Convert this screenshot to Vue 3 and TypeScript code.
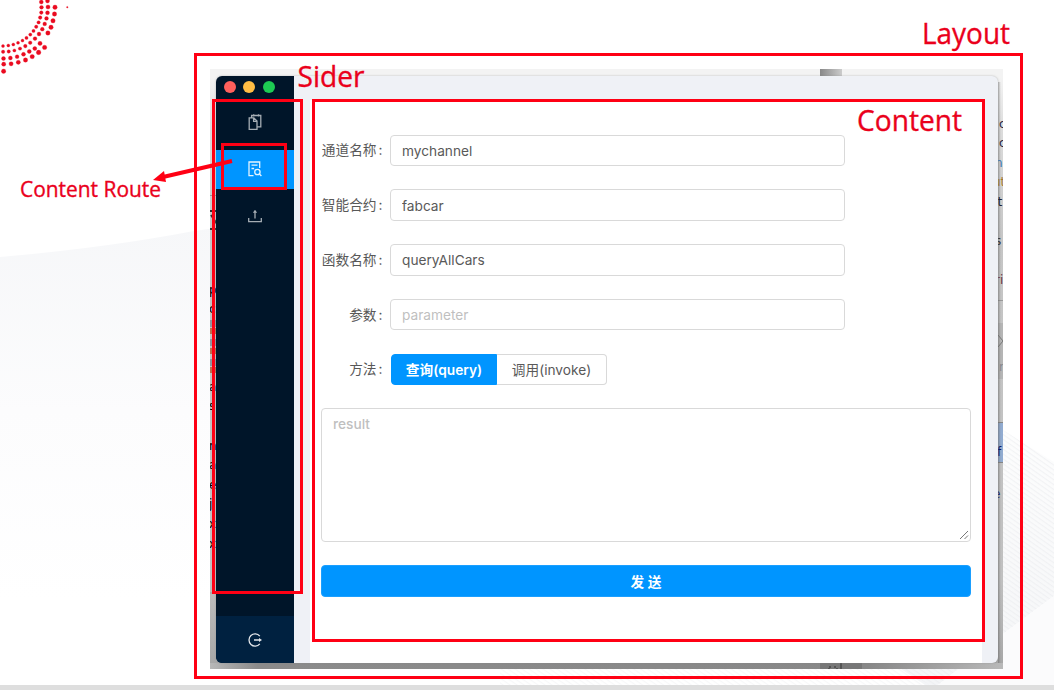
<script setup lang="ts">
import { ref } from 'vue'

interface Field {
  label: string
  value: string
  placeholder: string
}

const fields = ref<Field[]>([
  { label: '通道名称', value: 'mychannel', placeholder: '' },
  { label: '智能合约', value: 'fabcar', placeholder: '' },
  { label: '函数名称', value: 'queryAllCars', placeholder: '' },
  { label: '参数', value: '', placeholder: 'parameter' },
])
const method = ref<'query' | 'invoke'>('query')

// x, y, radius of each dot in the corner ornament
const dots: number[][] = [
  [41.3, 2, 2], [47.5, 1, 2], [41.5, 7.3, 1.9], [48, 7, 2.1], [55, 7.2, 2.2],
  [41.3, 12.6, 1.8], [47.5, 12.8, 2], [54.5, 14, 2.2], [40.2, 17.6, 1.8], [46.5, 18.4, 1.9], [53, 20.8, 2.2],
  [38.6, 22.4, 1.7], [44.7, 23.9, 1.9], [51, 27.3, 2.2], [36.2, 26.8, 1.7], [42.3, 29.2, 1.9], [47.9, 33, 2.2],
  [33.5, 30.9, 1.6], [39, 34, 1.9], [30.3, 34.6, 1.6], [35, 38.6, 1.9], [40, 43.4, 2.1], [44.6, 47.4, 2.2],
  [26.5, 37.9, 1.6], [30.2, 42.7, 1.8], [25.3, 46.1, 1.8], [29.3, 51.4, 2], [34.8, 48.5, 2], [38.6, 52.4, 2.3],
  [22.5, 40.6, 1.5], [18, 42.8, 1.5], [13.3, 44.5, 1.5], [8.3, 45.5, 1.5], [3, 46, 1.5],
  [20, 48.6, 1.7], [14.4, 50.5, 1.6], [8.7, 51.5, 1.7], [3.1, 51.8, 1.7],
  [23.5, 54.3, 2], [17.1, 56.7, 1.9], [10.4, 58, 2], [3.5, 58.5, 2],
  [32.2, 56.6, 2.2], [25.5, 60, 2.2], [18.3, 62.3, 2.1], [11.1, 63.8, 2.1], [3.7, 64.2, 2.1],
  [3.6, 71.2, 2.2], [67.3, 7.2, 0.8],
]

const leftText: [string, number][] = [
  ['p', 294], ['c', 313], ['a', 391], ['s', 410], ['n', 450], ['a', 469], ['e', 489], ['j', 508], ['x', 528], ['x', 548],
]
const rightText: [string, number, number, string][] = [
  ['c', 999, 128, '#262640'], ['c', 999, 147, '#262640'], ['n', 995, 167, '#3975ac'], ['ut', 993, 186, '#a27830'],
  ['t', 997.5, 206, '#20202c'], ['s', 995, 245, '#333'], ['ri', 995, 284, '#69343e'], ['r', 999, 371, '#87878d'],
  ['f', 997, 456, '#101864'], ['e', 993, 498, '#202060'],
]
</script>

<template>
  <main class="slide">
    <svg class="layer" viewBox="0 0 1054 690" aria-hidden="true">
      <defs>
        <linearGradient id="hill" x1="0" y1="0" x2="0" y2="1">
          <stop offset="0" stop-color="#f6f7f9" /><stop offset=".5" stop-color="#fcfcfd" /><stop offset="1" stop-color="#fff" />
        </linearGradient>
        <linearGradient id="fade" gradientUnits="userSpaceOnUse" x1="0" y1="430" x2="0" y2="685">
          <stop offset="0" stop-color="#f5f6f7" stop-opacity=".2" /><stop offset="1" stop-color="#f4f5f7" />
        </linearGradient>
        <linearGradient id="edge" x1="0" y1="0" x2="0" y2="1">
          <stop offset="0" stop-color="#f7f7f7" /><stop offset=".1" stop-color="#dcdcdc" /><stop offset=".28" stop-color="#c6c6c6" />
          <stop offset=".85" stop-color="#c0c0c0" /><stop offset="1" stop-color="#a6a6a6" />
        </linearGradient>
        <linearGradient id="shade" x1="0" y1="0" x2="1" y2="0">
          <stop offset="0" stop-color="#555" stop-opacity=".45" /><stop offset=".6" stop-color="#777" stop-opacity="0" />
        </linearGradient>
        <linearGradient id="tab" x1="0" y1="0" x2="1" y2="0">
          <stop offset="0" stop-color="#888" /><stop offset="1" stop-color="#ccc" />
        </linearGradient>
        <linearGradient id="foot" x1="0" y1="0" x2="1" y2="0">
          <stop offset="0" stop-color="#b8b8b8" /><stop offset=".06" stop-color="#8b8b8b" /><stop offset=".83" stop-color="#888" /><stop offset="1" stop-color="#b9b9b9" />
        </linearGradient>
        <pattern id="stripes" width="4" height="4" patternUnits="userSpaceOnUse" patternTransform="rotate(35)">
          <rect width="4" height="1.2" fill="#e6e7eb" />
        </pattern>
        <clipPath id="capture"><rect x="210" y="69" width="793" height="600" /></clipPath>
      </defs>
      <path d="M0 257Q105 248 194 231L260 222V600H0Z" fill="url(#hill)" />
      <path d="M1003 430L1054 462V596L1003 634L938 685H925L895 665Z" fill="url(#fade)" />
      <path d="M1003 430L1054 462V596L1003 634L940 685H930L895 665Z" fill="url(#stripes)" opacity=".45" />
      <path d="M500 668H900L925 685H500Z" fill="url(#stripes)" opacity=".3" />
      <path d="M1054 596L1003 634L938 685H1054Z" fill="#fbfbfc" />
      <rect y="685" width="1054" height="5" fill="#dedede" />
      <circle v-for="(d, i) in dots" :key="i" :cx="d[0]" :cy="d[1]" :r="d[2]" class="dot" />
      <g clip-path="url(#capture)">
        <rect x="210" y="69" width="793" height="600" fill="url(#edge)" />
        <rect x="210" y="69" width="793" height="8" fill="#f3f3f3" />
        <rect x="820" y="69" width="22" height="7" fill="url(#tab)" />
        <rect x="210" y="663" width="793" height="6" fill="url(#foot)" />
        <rect x="820" y="663" width="42" height="6" fill="#777" />
        <path d="M829 667h2m3 0h2m-8 2h2m6 0h2M841 663v6" stroke="#333" />
        <path d="M210 195.500h6M210 593h6" stroke="#999" />
        <path d="M210 211h6M211 215l6 9M210 229h6" stroke="#333" stroke-width="2" />
        <g fill="#9296a0"><path d="M210 320h6v7h-6zM210 339h6v7h-6zM210 359h6v7h-6z" /></g>
        <g fill="#bd6f50"><path d="M210 328h6v6h-6zM210 348h6v6h-6zM210 367h6v6h-6z" /></g>
        <text v-for="([t, y], i) in leftText" :key="'l' + i" x="209" :y="y" class="fragment">{{ t }}</text>
        <path d="M998 300.500h5" stroke="#999" />
        <path d="M998 323h5v56h-5z" fill="#b5b5b5" />
        <path d="M998 423h5v39h-5z" fill="#91abd0" />
        <path d="M998 422.500h5m-5 40h5" stroke="#858585" />
        <path d="M998 335l5 6-5 6" fill="none" stroke="#777" />
        <rect x="998" y="82" width="5" height="581" fill="url(#shade)" />
        <text v-for="([t, x, y, c], i) in rightText" :key="'r' + i" :x="x" :y="y" :fill="c" class="fragment">{{ t }}</text>
      </g>
    </svg>

    <section class="window">
      <aside class="sider">
        <div class="lights"><i class="close" /><i class="minimize" /><i class="expand" /></div>
        <nav class="menu">
          <a class="item">
            <svg viewBox="0 0 16 18" width="16" height="18" class="icon">
              <path d="M2.200 4.800h4.600l3.200 3.200v8.300H2.200zM6.600 4.800v3.500H10M4.600 4.500V2.500h9.200v11.300H10.500M6.700 1.300v2.200M11.500 1.300v2.200" />
            </svg>
          </a>
          <a class="item active">
            <svg viewBox="0 0 16 18" width="16" height="18" class="icon">
              <path d="M6.500 15.700H2V2h10.700v6M4.500 5.200h6M4.500 8.500h2.600" /><circle cx="10.400" cy="12" r="2.700" /><path d="M12.400 14l2 2" />
            </svg>
          </a>
          <a class="item">
            <svg viewBox="0 0 16 18" width="16" height="18" class="icon">
              <path d="M1.700 11v3.700h12.600V11M8 11.500V4" /><path d="M5.800 5.800L8 2.800l2.200 3z" fill="currentColor" stroke="none" />
            </svg>
          </a>
        </nav>
        <a class="logout">
          <svg viewBox="0 0 16 16" width="16" height="16" class="icon">
            <path d="M12.800 4.100A6.100 6.100 0 1 0 12.800 11.900M7 8h6" /><path d="M12 6l3 2-3 2z" fill="currentColor" stroke="none" />
          </svg>
        </a>
      </aside>
      <form class="content" @submit.prevent>
        <div v-for="f in fields" :key="f.label" class="row">
          <label class="label">{{ f.label }}<span class="colon">:</span></label>
          <input v-model="f.value" class="input" :placeholder="f.placeholder" spellcheck="false" />
        </div>
        <div class="row">
          <label class="label">方法<span class="colon">:</span></label>
          <div class="methods">
            <button type="button" class="method query" :class="{ chosen: method === 'query' }" @click="method = 'query'">查询(query)</button>
            <button type="button" class="method invoke" :class="{ chosen: method === 'invoke' }" @click="method = 'invoke'">调用(invoke)</button>
          </div>
        </div>
        <div class="result">
          <span>result</span>
          <svg class="grip" viewBox="0 0 10 10" width="10" height="10"><path d="M1 9L9 1M5.500 9L9 5.500" /></svg>
        </div>
        <button type="submit" class="send">发 送</button>
      </form>
    </section>

    <svg class="layer notes" viewBox="0 0 1054 690">
      <g class="boxes">
        <rect x="195.500" y="54.500" width="826" height="623" />
        <rect x="213.500" y="100.500" width="88" height="492" />
        <rect x="313.500" y="100.500" width="670" height="540" />
        <rect x="222.500" y="144.500" width="63" height="44" />
      </g>
      <path d="M232 161L163 177" stroke="#ff0014" stroke-width="4" />
      <path d="M153 180L164 171L166 182Z" fill="#ff0014" />
      <text x="922" y="44" font-size="29" textLength="88" lengthAdjust="spacingAndGlyphs">Layout</text>
      <text x="297.500" y="87" font-size="29" textLength="67" lengthAdjust="spacingAndGlyphs">Sider</text>
      <text x="857" y="131" font-size="29" textLength="105" lengthAdjust="spacingAndGlyphs">Content</text>
      <text x="20" y="197" font-size="21" textLength="141" lengthAdjust="spacingAndGlyphs">Content Route</text>
    </svg>
  </main>
</template>

<style>
body { margin: 0; overflow: hidden; }
</style>

<style scoped>
.slide {
  position: relative;
  box-sizing: border-box;
  width: 1054px;
  height: 690px;
  padding: 76px 56px 27px 216px;
  overflow: hidden;
  background: #fff;
  font-family: Inter, "Noto Sans CJK SC", sans-serif;
}
.layer { position: absolute; inset: 0; width: 1054px; height: 690px; }
.dot { fill: #ea0a20; stroke: #ea0a20; stroke-width: .3; }
.notes { pointer-events: none; }
.notes text { fill: #ea001b; stroke: #ea001b; stroke-width: .35; font-family: "Open Sans", "Noto Sans", sans-serif; }
.boxes { fill: none; stroke: #ff0014; stroke-width: 3; }
.fragment { font: 12px "DejaVu Sans", sans-serif; }
.window {
  position: relative;
  display: flex;
  height: 587px;
  overflow: hidden;
  border-radius: 6px;
  background: #eff1f6;
  box-shadow: 0 0 2px #8889;
}
.sider { display: flex; flex-direction: column; width: 78px; background: #001529; }
.lights { display: flex; gap: 7.500px; padding: 4.500px 0 0 7.500px; height: 22.500px; box-sizing: border-box; }
.lights i { width: 12px; height: 12px; border-radius: 50%; }
.close { background: #ff605c; }
.minimize { background: #ffbd44; }
.expand { background: #1dcb53; }
.menu { display: flex; flex-direction: column; gap: 8px; padding-top: 4px; flex: 1; }
.item { display: flex; align-items: center; justify-content: center; height: 39px; color: #a5adb4; }
.active { background: #0095ff; color: #e5f5ff; }
.icon { fill: none; stroke: currentColor; stroke-width: 1.300; }
.logout { display: flex; align-items: center; justify-content: center; height: 47px; background: #002140; color: #e3e7eb; }
.content {
  box-sizing: border-box;
  width: 672px;
  margin: 24px 0 0 16px;
  padding: 34.500px 11px 0;
  background: #fff;
}
.row { display: flex; align-items: center; height: 31.500px; margin-bottom: 23.250px; }
.label { width: 69px; box-sizing: border-box; padding: 0 7.500px 2px 0; text-align: right; white-space: nowrap; font-size: 13.700px; color: #585858; font-weight: 400; }
.colon { margin: 0 0 0 2px; }
.input {
  box-sizing: border-box;
  width: 455px;
  height: 31.500px;
  padding: 1px 11px 0;
  border: 1px solid #d9d9d9;
  border-radius: 4px;
  outline: 0;
  background: #fff;
  color: #595959;
  font: 13.700px Inter, sans-serif;
}
.input::placeholder { color: #bfbfbf; }
.methods { display: flex; padding-left: 1px; }
.method {
  height: 31px;
  padding: 0 0 1px;
  border: 1px solid #d9d9d9;
  background: #fff;
  color: #595959;
  font: 13.700px Inter, "Noto Sans CJK SC", sans-serif;
  white-space: nowrap;
}
.query { width: 106px; border-radius: 4px 0 0 4px; }
.invoke { width: 110px; border-left: 0; border-radius: 0 4px 4px 0; }
.chosen { border-color: #0095ff; background: #0095ff; color: #fff; font-weight: 600; }
.result {
  position: relative;
  box-sizing: border-box;
  height: 134px;
  padding: 7px 11px;
  border: 1px solid #d9d9d9;
  border-radius: 4px;
  color: #bfbfbf;
  font-size: 13.700px;
  font-weight: 500;
  line-height: 17px;
}
.grip { position: absolute; right: 1px; bottom: 1px; fill: none; stroke: #777; }
.send {
  display: block;
  width: 100%;
  height: 32px;
  margin-top: 22.500px;
  padding: 0;
  border: 1px solid #1b9fff;
  border-radius: 4px;
  background: #0095ff;
  color: #fff;
  font: 600 13.700px Inter, "Noto Sans CJK SC", sans-serif;
}
</style>
